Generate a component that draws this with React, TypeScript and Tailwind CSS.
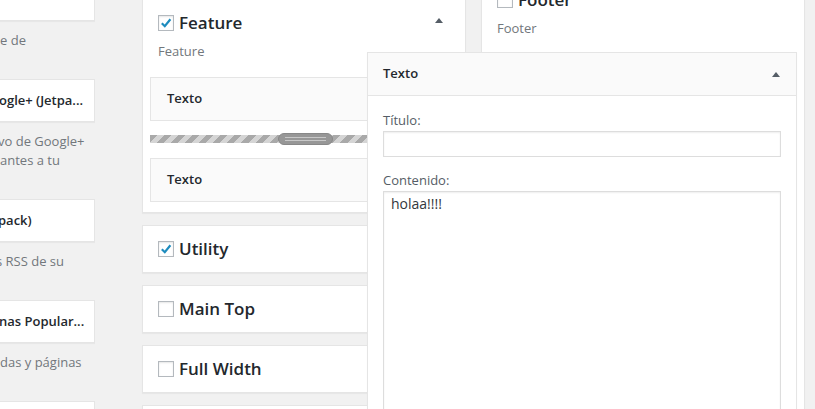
import React from "react";

function Box({ checked }: { checked?: boolean }) {
  return (
    <span className="w-4 h-4 border border-[#b4b9be] bg-white shadow-[inset_0_1px_2px_rgba(0,0,0,0.1)] flex items-center justify-center shrink-0">
      {checked && (
        <svg width="12" height="12" viewBox="0 0 12 12">
          <path d="M1.8 6.2 L4.8 9.2 L10.4 2.2" stroke="#1e8cbe" strokeWidth="2.2" fill="none" strokeLinejoin="miter" />
        </svg>
      )}
    </span>
  );
}

function Arrow({ className = "" }: { className?: string }) {
  return (
    <svg width="8" height="5" viewBox="0 0 8 5" className={className}>
      <path d="M4 0 L8 5 L0 5Z" fill="#555d66" />
    </svg>
  );
}

function LeftCard({ text, off }: { text: string; off: string }) {
  return (
    <div className="h-[43px] bg-white border border-[#e5e5e5] border-l-0 shadow-[0_1px_1px_rgba(0,0,0,0.04)] flex items-center overflow-hidden">
      <span className={`whitespace-nowrap text-[13px] font-semibold text-[#23282d] ${off}`}>{text}</span>
    </div>
  );
}

function LeftDesc({ lines }: { lines: { t: string; off: string }[] }) {
  return (
    <div className="pt-[10px] pb-[29px] text-[13px] leading-[19px] text-[#72777c]">
      {lines.map((l, i) => (
        <div key={i} className={`whitespace-nowrap ${l.off}`}>{l.t}</div>
      ))}
    </div>
  );
}

function SideTitle({ label, checked, arrow }: { label: string; checked?: boolean; arrow?: boolean }) {
  return (
    <div className="h-[24px] flex items-center pl-[15px] pr-[22px]">
      <Box checked={checked} />
      <span className="ml-[5px] text-[17px] font-semibold text-[#23282d] leading-[24px]">{label}</span>
      {arrow && <Arrow className="ml-auto -translate-y-[3px]" />}
    </div>
  );
}

function SmallBox({ label, checked }: { label: string; checked?: boolean }) {
  return (
    <div className="h-[48px] bg-white border border-[#e5e5e5] shadow-[0_1px_1px_rgba(0,0,0,0.04)] flex items-center">
      <div className="flex items-center pl-[15px]">
        <Box checked={checked} />
        <span className="ml-[5px] text-[17px] font-semibold text-[#23282d] leading-[24px]">{label}</span>
      </div>
    </div>
  );
}

function WidgetRow() {
  return (
    <div className="h-[44px] mx-[7px] bg-[#fafafa] border border-[#e5e5e5] flex items-center pl-[16px] text-[13px] font-semibold text-[#23282d]">
      Texto
    </div>
  );
}

export default function App() {
  return (
    <div className="w-[815px] h-[409px] overflow-hidden bg-[#f1f1f1] flex items-start font-['Open_Sans',sans-serif]">
      {/* left column */}
      <div className="w-[95px] shrink-0 -mt-[22px] overflow-hidden">
        <LeftCard text="" off="" />
        <LeftDesc lines={[{ t: "e de", off: "" }]} />
        <LeftCard text="ogle+ (Jetpa..." off="-ml-[1px]" />
        <LeftDesc lines={[{ t: "vo de Google+", off: "-ml-[2px]" }, { t: "antes a tu", off: "" }]} />
        <LeftCard text="pack)" off="-ml-[2px]" />
        <LeftDesc lines={[{ t: "s RSS de su", off: "-ml-[4px]" }]} />
        <LeftCard text="nas Popular..." off="-ml-[1px]" />
        <LeftDesc lines={[{ t: "das y páginas", off: "" }]} />
        <LeftCard text="" off="" />
      </div>

      {/* middle column */}
      <div className="w-[324px] shrink-0 ml-[47px] -mt-px flex flex-col">
        <div className="bg-white border border-[#e5e5e5] shadow-[0_1px_1px_rgba(0,0,0,0.04)] pt-[11px] pb-[10px]">
          <SideTitle label="Feature" checked arrow />
          <div className="mt-[7px] pl-[15px] text-[13px] leading-[19px] text-[#72777c]">Feature</div>
          <div className="mt-[16px]">
            <WidgetRow />
          </div>
          <div className="relative h-[12px] mx-[7px] mt-[12px] flex items-center">
            <div className="absolute left-0 right-0 top-[2px] h-[8px] bg-[repeating-linear-gradient(135deg,#a9a9a9_0px,#a9a9a9_5px,#d5d5d5_5px,#d5d5d5_10px)]" />
            <div className="relative ml-[128px] w-[55px] h-[12px] rounded-[6px] bg-[#979797] border border-[#888888] flex flex-col justify-center gap-[2px] px-[6px]">
              <div className="h-px bg-[#c8c8c8]" />
              <div className="h-px bg-[#c8c8c8]" />
            </div>
          </div>
          <div className="mt-[13px]">
            <WidgetRow />
          </div>
        </div>
        <div className="mt-[12px]"><SmallBox label="Utility" checked /></div>
        <div className="mt-[12px]"><SmallBox label="Main Top" /></div>
        <div className="mt-[12px]"><SmallBox label="Full Width" /></div>
        <div className="mt-[12px]"><SmallBox label="Main" /></div>
      </div>

      {/* right column */}
      <div className="w-[324px] shrink-0 ml-[15px] -mt-[24px]">
        <div className="bg-white border border-[#e5e5e5] shadow-[0_1px_1px_rgba(0,0,0,0.04)] pt-[11px] pb-[10px] h-[460px]">
          <SideTitle label="Footer" />
          <div className="mt-[7px] pl-[15px] text-[13px] leading-[19px] text-[#72777c]">Footer</div>
          <div className="mt-[14px] mx-[7px]">
            <div className="relative z-10 -ml-[122px] bg-white border border-[#e5e5e5] shadow-[0_1px_1px_rgba(0,0,0,0.04)]">
              <div className="h-[43px] bg-[#fafafa] border-b border-[#e5e5e5] flex items-center pl-[15px] pr-[16px]">
                <span className="text-[13px] font-semibold text-[#23282d]">Texto</span>
                <Arrow className="ml-auto" />
              </div>
              <div className="px-[15px] pt-[15px] pb-[15px]">
                <div className="text-[13px] leading-[19px] text-[#555d66]">Título:</div>
                <input
                  readOnly
                  defaultValue=""
                  className="mt-px block w-full h-[26px] bg-white border border-[#dddddd] shadow-[inset_0_1px_2px_rgba(0,0,0,0.07)] outline-none"
                />
                <div className="mt-[14px] text-[13px] leading-[19px] text-[#555d66]">Contenido:</div>
                <textarea
                  readOnly
                  defaultValue="holaa!!!!"
                  className="mt-px block w-full h-[260px] resize-none bg-white border border-[#dddddd] shadow-[inset_0_1px_2px_rgba(0,0,0,0.07)] outline-none pl-[7px] pt-[2px] text-[14px] leading-[20px] text-[#32373c] font-['Open_Sans',sans-serif]"
                />
              </div>
            </div>
          </div>
        </div>
      </div>
    </div>
  );
}
